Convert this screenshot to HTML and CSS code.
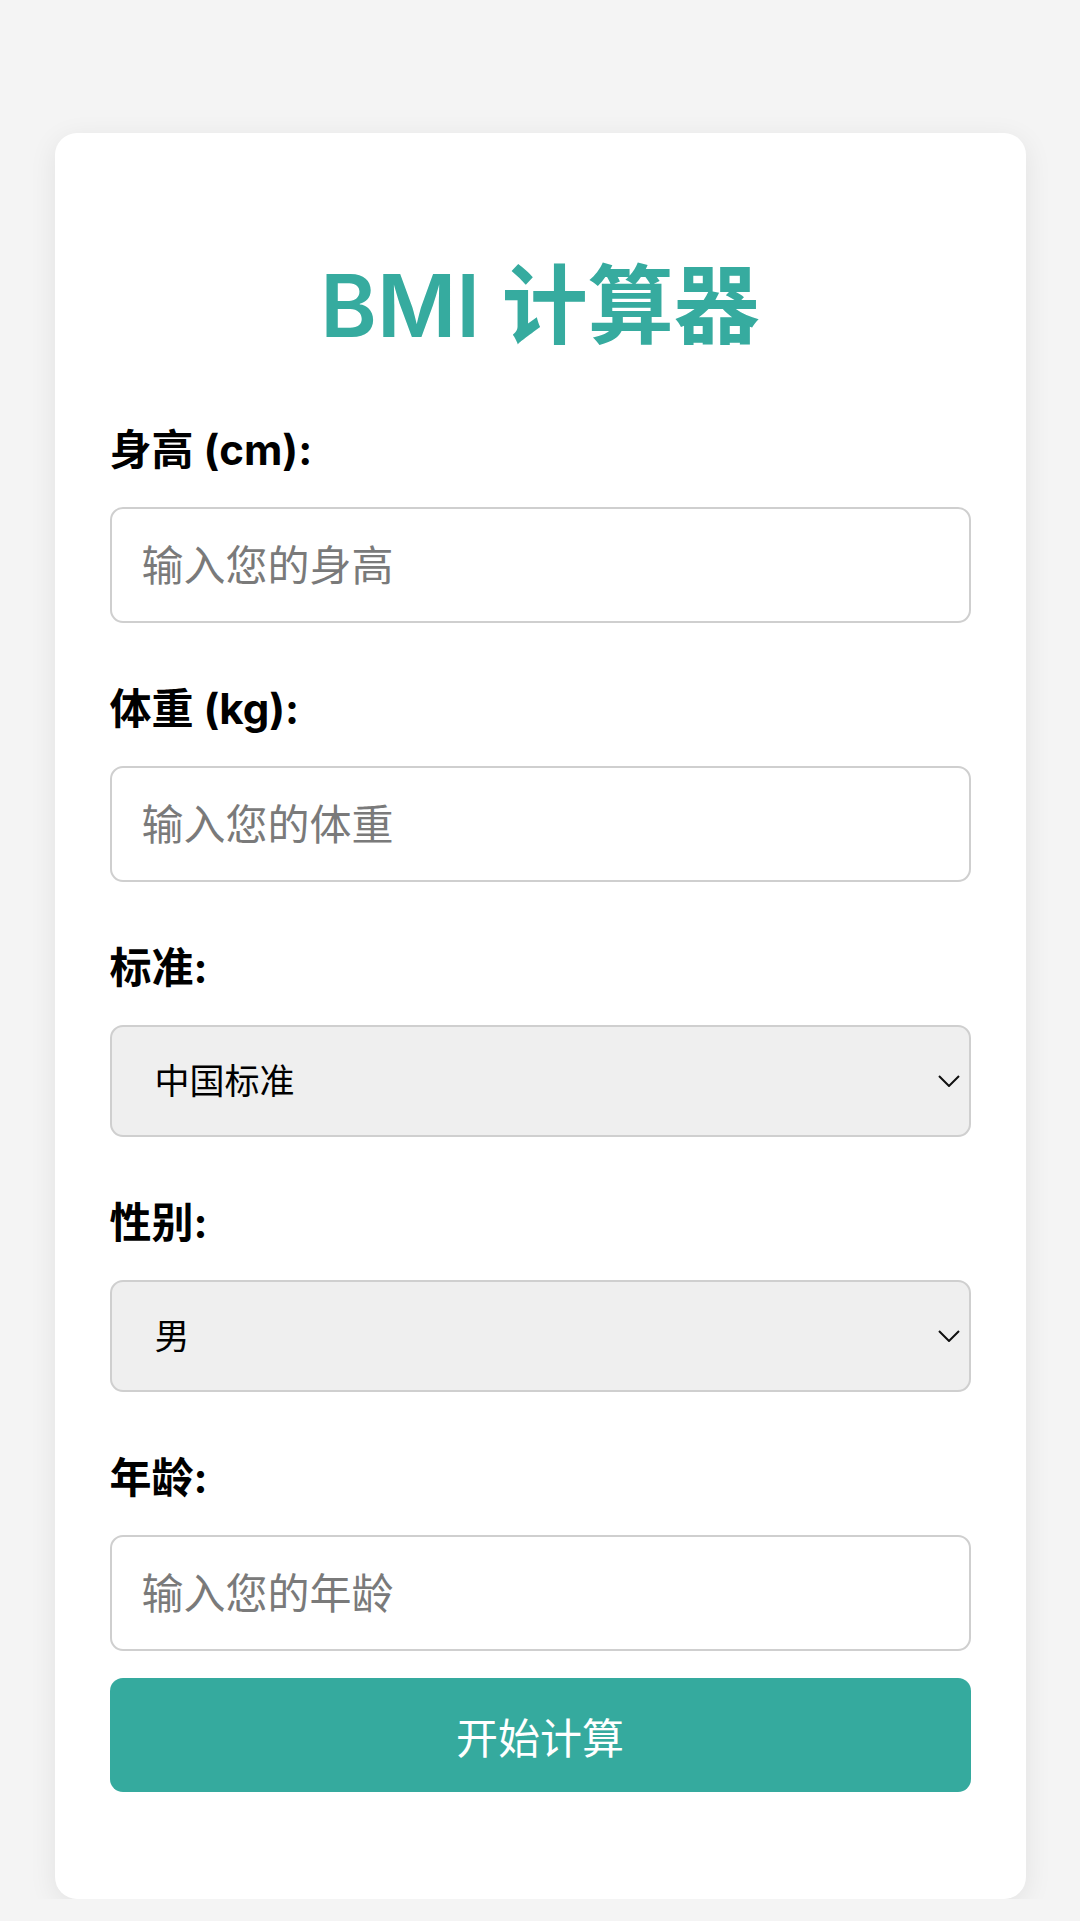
FILE: index.html
```html
<!DOCTYPE html>
<html>
<head lang="zh">
    <meta charset="UTF-8">
    <title>BMI 计算器</title>
    <link rel="stylesheet" href="styles.css">
</head>
<body>
    <div class="card">
        <h1 class="title">BMI 计算器</h1>
        <div class="field">
            <label for="height">身高 (cm):</label>
            <input type="number" id="height" placeholder="输入您的身高">
        </div>
        <div class="field">
            <label for="weight">体重 (kg):</label>
            <input type="number" id="weight" placeholder="输入您的体重">
        </div>
        <div class="field">
            <label for="standard">标准:</label>
            <div class="select-wrap">
                <select id="standard">
                    <option>中国标准</option>
                    <option>国际标准</option>
                </select>
                <svg class="arrow" width="22" height="12" viewBox="0 0 22 12"><path d="M1 1 L11 11 L21 1" fill="none" stroke="#111" stroke-width="2"/></svg>
            </div>
        </div>
        <div class="field">
            <label for="gender">性别:</label>
            <div class="select-wrap">
                <select id="gender">
                    <option>男</option>
                    <option>女</option>
                </select>
                <svg class="arrow" width="22" height="12" viewBox="0 0 22 12"><path d="M1 1 L11 11 L21 1" fill="none" stroke="#111" stroke-width="2"/></svg>
            </div>
        </div>
        <div class="field">
            <label for="age">年龄:</label>
            <input type="number" id="age" placeholder="输入您的年龄">
        </div>
        <button class="btn">开始计算</button>
    </div>
</body>
</html>
```

FILE: styles.css
```css
*{
    margin: 0;
    padding: 0;
    box-sizing: border-box;
}
body{
    background: #f4f4f4;
    font-family: Inter, "Noto Sans CJK SC", sans-serif;
    color: #000;
}
.card{
    width: 971px;
    margin: 133px auto 0;
    padding: 123px 55px 107px;
    background: #fff;
    border-radius: 22px;
    box-shadow: 0 6px 28px rgba(0,0,0,0.08);
}
.title{
    font-size: 86px;
    line-height: 101px;
    font-weight: 600;
    color: #36ab9f;
    text-align: center;
    margin-bottom: 68px;
}
.field{
    display: flex;
    flex-direction: column;
    gap: 32px;
}
.field + .field{
    margin-top: 61px;
}
.field label{
    font-size: 42px;
    line-height: 50px;
    font-weight: 700;
}
.field input{
    height: 116px;
    padding: 0 30px;
    font-family: inherit;
    font-size: 42px;
    border: 2px solid #cfcfcf;
    border-radius: 13px;
    outline: none;
    background: #fff;
}
.field input::placeholder{
    color: #7a7a7a;
}
.select-wrap{
    position: relative;
}
.select-wrap select{
    width: 100%;
    height: 112px;
    padding: 0 43px;
    font-family: inherit;
    font-size: 35px;
    color: #000;
    background: #efefef;
    border: 2px solid #cfcfcf;
    border-radius: 13px;
    appearance: none;
    -webkit-appearance: none;
    outline: none;
}
.select-wrap .arrow{
    position: absolute;
    right: 11px;
    top: 50%;
    margin-top: -6px;
    pointer-events: none;
}
.btn{
    display: block;
    width: 100%;
    height: 114px;
    margin-top: 27px;
    font-family: inherit;
    font-size: 42px;
    color: #fff;
    background: #35aa9e;
    border: none;
    border-radius: 13px;
    cursor: pointer;
}
```
